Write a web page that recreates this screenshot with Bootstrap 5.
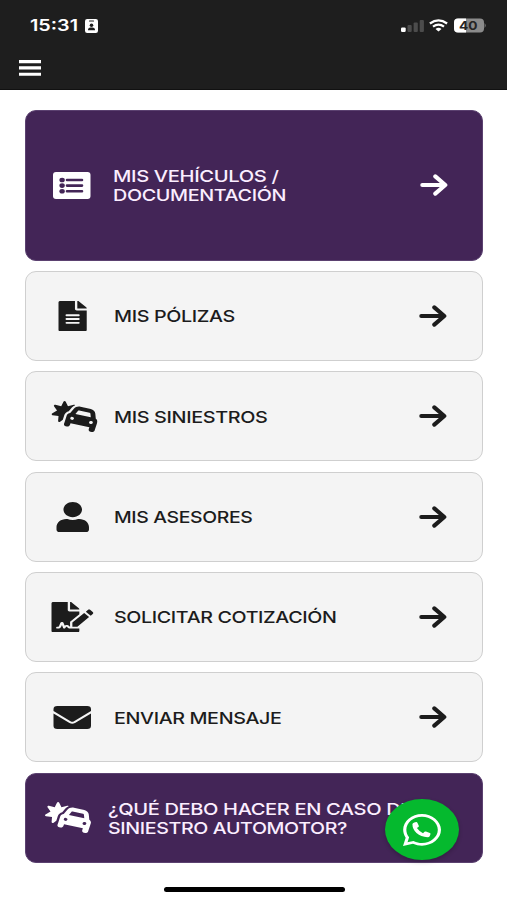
<!DOCTYPE html>
<html lang="es">
<head>
<meta charset="utf-8">
<meta name="viewport" content="width=device-width, initial-scale=1">
<title>Menú principal</title>
<link href="https://cdn.jsdelivr.net/npm/bootstrap@5.3.0/dist/css/bootstrap.min.css" rel="stylesheet">
<style>
body{font-family:Inter,"Open Sans",sans-serif;background:#fff;height:900px;overflow:hidden}
svg{display:block;flex:none}
.top-area{height:90px;background:#1e1e1e;color:#fff;padding:16px 21.5px 0 30px;border-bottom:1px solid #111}
.status-row{height:19px}
.clock{font-size:16px;font-weight:600;line-height:19px;width:54.5px}
.wide{display:inline-block;transform-origin:0 50%;white-space:nowrap}
.menu-btn{margin:25px 0 0 -11px}
.menu-list{padding:20px 24.5px 0 25px;gap:10.2px}
.tile{height:90.2px;flex:none;border-radius:11px;background:#f4f4f4;border:1.3px solid #cfcfcf;color:#1c1c1c}
.tile:hover{color:#1c1c1c}
.tile-purple,.tile-purple:hover{background:#432557;border-color:#5b4170;color:#fbeeff}
.tile-tall{height:150.6px}
.icon-box{width:89.5px;margin-left:-1.5px}
.tile-tall .icon-box{width:88.5px}
.tile-last .icon-box{width:83.5px}
.tile-last .icon-box svg{margin-left:1px}
.tile-label{font-size:16.2px;font-weight:500;line-height:18.8px;letter-spacing:-.3px;padding-top:1.5px}
.arrow-box{width:28px;margin-right:34.5px}
.tile-tall .arrow-box{margin-right:33.5px;color:#fff}
.wa-btn{position:absolute;left:385px;top:799px;width:74px;height:61px;border-radius:50%;background:#05b92e;box-shadow:0 2px 4px rgba(0,0,0,.22)}
.home-bar{width:181px;height:5px;border-radius:3px;background:#000;margin:24.5px 0 0 163.5px}
</style>
<script src="https://cdn.jsdelivr.net/npm/bootstrap@5.3.0/dist/js/bootstrap.bundle.min.js"></script>
</head>
<body>
<svg width="0" height="0" class="d-none">
  <symbol id="arrow" viewBox="0 0 28 22"><path d="M2.3 11H25M15.3 2.4L25.3 11L15.3 19.6" fill="none" stroke="currentColor" stroke-width="4.1" stroke-linecap="round" stroke-linejoin="round"/></symbol>
  <symbol id="crash" viewBox="4 8 604 496" preserveAspectRatio="none"><path fill="currentColor" d="M176 8c-6.6 0-12.4 4-14.9 10.1l-29.4 74L55.6 68.9c-6.3-1.9-13.1 .2-17.2 5.3s-4.6 12.2-1.4 17.9l39.5 69.1L10.900 206.400c-5.400 3.700-8 10.300-6.500 16.700s6.700 11.200 13.100 12.200l78.700 12.200L90.600 327c-.5 6.500 3.100 12.700 9 15.500s12.900 1.800 17.800-2.600l35.300-32.500 9.500-35.400 10.400-38.600c8-29.900 30.500-52.100 57.900-60.900l41-59.200c11.300-16.300 26.400-28.900 43.500-37.200c-.4-.6-.8-1.200-1.300-1.800c-4.100-5.100-10.900-7.200-17.200-5.300L220.300 92.100l-29.400-74C188.400 12 182.600 8 176 8zM367.700 161.500l135.600 36.300c6.500 1.800 11.300 7.400 11.800 14.200l4.600 56.500-201.500-54 32.200-46.600c3.800-5.600 10.800-8.100 17.300-6.400zm-69.900-30l-47.900 69.300c-21.600 3-40.300 18.600-46.300 41l-10.400 38.600-16.600 61.800-8.300 30.900c-4.600 17.100 5.600 34.600 22.600 39.200l15.500 4.100c17.100 4.600 34.600-5.600 39.200-22.600l8.300-30.900 247.300 66.300-8.300 30.900c-4.600 17.100 5.600 34.600 22.600 39.200l15.500 4.100c17.100 4.600 34.600-5.600 39.200-22.600l8.300-30.900L595 388l10.400-38.600c6-22.400-2.500-45.200-19.600-58.700l-6.800-84c-2.700-33.700-26.400-62-59-70.800L384.200 99.700c-32.700-8.800-67.300 4-86.500 31.800zm-17 131a24 24 0 1 1 -12.400 46.400 24 24 0 1 1 12.400-46.400zm217.900 83.200A24 24 0 1 1 545 358.100a24 24 0 1 1 -46.400-12.400z"/></symbol>
</svg>

<header class="top-area">
  <div class="status-row d-flex align-items-center">
    <span class="clock"><span class="wide" data-w="48">15:31</span></span>
    <svg width="13" height="14" viewBox="0 0 13 14"><rect width="13" height="14" rx="2.2" fill="#fff"/><path d="M4.5 2H8.5" stroke="#1e1e1e" stroke-width="1.1" stroke-linecap="round"/><circle cx="6.5" cy="6.2" r="1.8" fill="#1e1e1e"/><path d="M3 11.2V10.6Q3.3 8.8 5.5 8.6H7.5Q9.7 8.8 10 10.6V11.2Z" fill="#1e1e1e"/></svg>
    <div class="d-flex align-items-center ms-auto">
      <svg width="24" height="14" viewBox="0 0 24 14"><rect x="0" y="8.4" width="4.7" height="4.6" rx="1.2" fill="#fff"/><g fill="#4c4c4c"><rect x="6.5" y="6" width="4.2" height="7" rx="1"/><rect x="12.6" y="3.5" width="4.2" height="9.5" rx="1"/><rect x="18.7" y="1" width="4.2" height="12" rx="1"/></g></svg>
      <svg width="19" height="13" viewBox="0 0 19 13" class="ms-1" fill="none" stroke="#fff" stroke-width="2.2"><path d="M.9 4.5Q9.5-1.8 18.1 4.5"/><path d="M4 7.7Q9.5 3.4 15 7.7"/><path d="M6.500 10Q9.500 7.700 12.500 10L9.500 12.600Z" fill="#fff" stroke="none"/></svg>
      <svg width="34" height="15" viewBox="0 0 34 15" class="ms-1"><rect x="2" y=".5" width="30" height="14" rx="4" fill="#8b8b8b"/><path d="M6 .5H14V14.5H6A4 4 0 0 1 2 10.5V4.5A4 4 0 0 1 6 .5Z" fill="#fff"/><path d="M32.600 5Q34.600 7.500 32.600 10Z" fill="#8b8b8b"/><text x="7" y="12" font-family="Inter" font-size="12" font-weight="700" textLength="18.5" lengthAdjust="spacingAndGlyphs" fill="#252525">40</text></svg>
    </div>
  </div>
  <svg class="menu-btn" width="22" height="17" viewBox="0 0 22 17"><path d="M0 1.600H22M0 7.900H22M0 14.200H22" stroke="#fff" stroke-width="3.100"/></svg>
</header>

<main class="menu-list d-flex flex-column">
  <a class="tile tile-purple tile-tall d-flex align-items-center text-decoration-none">
    <div class="icon-box"><svg width="66" height="27" viewBox="-28 0 66 27"><rect width="37.5" height="27" rx="3" fill="#fff"/><path d="M14 8H29M14 13.6H29M14 19.3H29" fill="none" stroke="#432557" stroke-width="2.6" stroke-linecap="round"/><g fill="#432557"><ellipse cx="9.1" cy="8" rx="2.7" ry="2.3"/><ellipse cx="9.1" cy="13.6" rx="2.7" ry="2.3"/><ellipse cx="9.1" cy="19.3" rx="2.7" ry="2.3"/></g></svg></div>
    <div class="tile-label flex-grow-1"><span class="wide" data-w="165.5">MIS VEHÍCULOS /</span><br><span class="wide" data-w="173">DOCUMENTACIÓN</span></div>
    <div class="arrow-box"><svg width="28" height="22"><use href="#arrow"/></svg></div>
  </a>
  <a class="tile d-flex align-items-center text-decoration-none">
    <div class="icon-box"><svg width="62" height="30" viewBox="-33.5 0 62 30"><path transform="scale(.0735 .0594)" fill="currentColor" d="M224 136V0H24C10.7 0 0 10.7 0 24v464c0 13.3 10.7 24 24 24h336c13.3 0 24-10.7 24-24V160H248c-13.2 0-24-10.8-24-24zm64 236c0 6.6-5.4 12-12 12H108c-6.6 0-12-5.400-12-12v-8c0-6.600 5.400-12 12-12h168c6.600 0 12 5.400 12 12v8zm0-64c0 6.600-5.400 12-12 12H108c-6.600 0-12-5.400-12-12v-8c0-6.600 5.400-12 12-12h168c6.600 0 12 5.400 12 12v8zm0-72v8c0 6.600-5.400 12-12 12H108c-6.600 0-12-5.400-12-12v-8c0-6.600 5.400-12 12-12h168c6.600 0 12 5.400 12 12zm96-114.100v6.100H256V0h6.100c6.400 0 12.500 2.500 17 7l97.900 98c4.500 4.500 7 10.600 7 16.900z"/></svg></div>
    <div class="tile-label flex-grow-1"><span class="wide" data-w="121">MIS PÓLIZAS</span></div>
    <div class="arrow-box"><svg width="28" height="22"><use href="#arrow"/></svg></div>
  </a>
  <a class="tile d-flex align-items-center text-decoration-none">
    <div class="icon-box"><svg width="73" height="31" viewBox="-26.5 0 73 31"><use href="#crash" width="46" height="31"/></svg></div>
    <div class="tile-label flex-grow-1"><span class="wide" data-w="153.5">MIS SINIESTROS</span></div>
    <div class="arrow-box"><svg width="28" height="22"><use href="#arrow"/></svg></div>
  </a>
  <a class="tile d-flex align-items-center text-decoration-none">
    <div class="icon-box"><svg width="65" height="30" viewBox="-31.5 0 65 30"><path transform="scale(.0725 .0594)" fill="currentColor" d="M224 256c70.7 0 128-57.3 128-128S294.7 0 224 0 96 57.3 96 128s57.3 128 128 128zm89.6 32h-16.7c-22.2 10.2-46.9 16-72.9 16s-50.6-5.8-72.9-16h-16.7C60.2 288 0 348.2 0 422.4V464c0 26.5 21.5 48 48 48h352c26.5 0 48-21.5 48-48v-41.6c0-74.2-60.2-134.4-134.4-134.4z"/></svg></div>
    <div class="tile-label flex-grow-1"><span class="wide" data-w="138.5">MIS ASESORES</span></div>
    <div class="arrow-box"><svg width="28" height="22"><use href="#arrow"/></svg></div>
  </a>
  <a class="tile d-flex align-items-center text-decoration-none">
    <div class="icon-box"><svg width="70" height="30" viewBox="-26.5 0 70 30"><path transform="scale(.0725 .0594)" fill="currentColor" d="M218.17 424.14c-2.95-5.92-8.09-6.52-10.17-6.52s-7.22.59-10.02 6.19l-7.67 15.34c-6.37 12.78-25.03 11.37-29.48-2.09L144 386.59l-10.61 31.88c-5.89 17.66-22.38 29.53-41 29.53H80c-8.84 0-16-7.16-16-16s7.16-16 16-16h12.39c4.83 0 9.11-3.08 10.64-7.66l18.19-54.64c3.3-9.81 12.44-16.41 22.78-16.41s19.48 6.59 22.77 16.41l13.88 41.64c19.75-16.19 54.06-9.7 66 14.16 1.89 3.78 5.49 5.95 9.36 6.26v-82.12l128-127.09V160H248c-13.2 0-24-10.8-24-24V0H24C10.7 0 0 10.7 0 24v464c0 13.3 10.7 24 24 24h336c13.3 0 24-10.7 24-24v-40l-128-.11c-16.12-.31-30.58-9.28-37.83-23.75zM384 121.9c0-6.3-2.5-12.4-7-16.9L279.1 7c-4.5-4.5-10.6-7-17-7H256v128h128v-6.1zm-96 225.06V416h68.99l161.68-162.78-67.88-67.88L288 346.96zm280.54-179.63l-31.87-31.87c-9.94-9.94-26.07-9.94-36.01 0l-27.25 27.25 67.88 67.88 27.25-27.25c9.95-9.94 9.95-26.07 0-36.01z"/></svg></div>
    <div class="tile-label flex-grow-1"><span class="wide" data-w="222.5">SOLICITAR COTIZACIÓN</span></div>
    <div class="arrow-box"><svg width="28" height="22"><use href="#arrow"/></svg></div>
  </a>
  <a class="tile d-flex align-items-center text-decoration-none">
    <div class="icon-box"><svg width="67" height="23" viewBox="-28.5 0 67 23"><path d="M3.8 0H33.7Q37.5 0 37.5 3.2V5L20.5 15.2Q18.750 16.2 17 15.2L0 5V3.2Q0 0 3.8 0ZM0 7.4L16 17Q18.750 18.500 21.500 17L37.500 7.400V19.800Q37.500 23 33.700 23H3.800Q0 23 0 19.800Z" fill="currentColor"/></svg></div>
    <div class="tile-label flex-grow-1"><span class="wide" data-w="167.5">ENVIAR MENSAJE</span></div>
    <div class="arrow-box"><svg width="28" height="22"><use href="#arrow"/></svg></div>
  </a>
  <a class="tile tile-purple tile-last d-flex align-items-center text-decoration-none">
    <div class="icon-box"><svg width="73" height="31" viewBox="-19 0 73 31" color="#fff"><use href="#crash" width="46" height="31"/></svg></div>
    <div class="tile-label flex-grow-1"><span class="wide" data-w="304">¿QUÉ DEBO HACER EN CASO DE</span><br><span class="wide" data-w="239">SINIESTRO AUTOMOTOR?</span></div>
  </a>
</main>
<div class="home-bar"></div>

<a class="wa-btn d-flex align-items-center justify-content-center" aria-label="WhatsApp">
  <svg width="38" height="32" viewBox="0 0 38 32"><path transform="scale(.0848 .0714) translate(0 -32)" fill="#fff" d="M380.9 97.1C339 55.1 283.2 32 223.9 32c-122.4 0-222 99.6-222 222 0 39.1 10.2 77.3 29.6 111L0 480l117.7-30.9c32.4 17.7 68.9 27 106.1 27h.1c122.3 0 224.1-99.6 224.1-222 0-59.3-25.2-115-67.1-157zm-157 341.6c-33.2 0-65.700-8.900-94-25.700l-6.700-4-69.800 18.300L72 359.200l-4.400-7c-18.500-29.400-28.200-63.300-28.200-98.200 0-101.700 82.800-184.500 184.600-184.500 49.300 0 95.600 19.200 130.400 54.100 34.800 34.900 56.200 81.200 56.100 130.500 0 101.800-84.900 184.600-186.600 184.600z"/><path d="M9.4 10.2Q9.5 8.8 11.3 8.4L13.2 8.1Q14 8 14.4 8.8L15.8 11.7Q16.1 12.4 15.4 12.9L13.900 14.100Q16 17.300 20 19.200L21.500 17.800Q22.100 17.200 22.900 17.500L26.900 19Q27.700 19.300 27.500 20.100L26.900 21.700Q26.400 23.200 24.500 23.200Q18 23 13.500 19Q9.500 15.100 9.400 10.200Z" fill="#fff"/></svg>
</a>
<script>
// Stretch each label horizontally to its display width
document.querySelectorAll('.wide').forEach(function (el) {
  el.style.transform = 'scaleX(' + (el.dataset.w / el.getBoundingClientRect().width) + ')';
});
</script>
</body>
</html>
